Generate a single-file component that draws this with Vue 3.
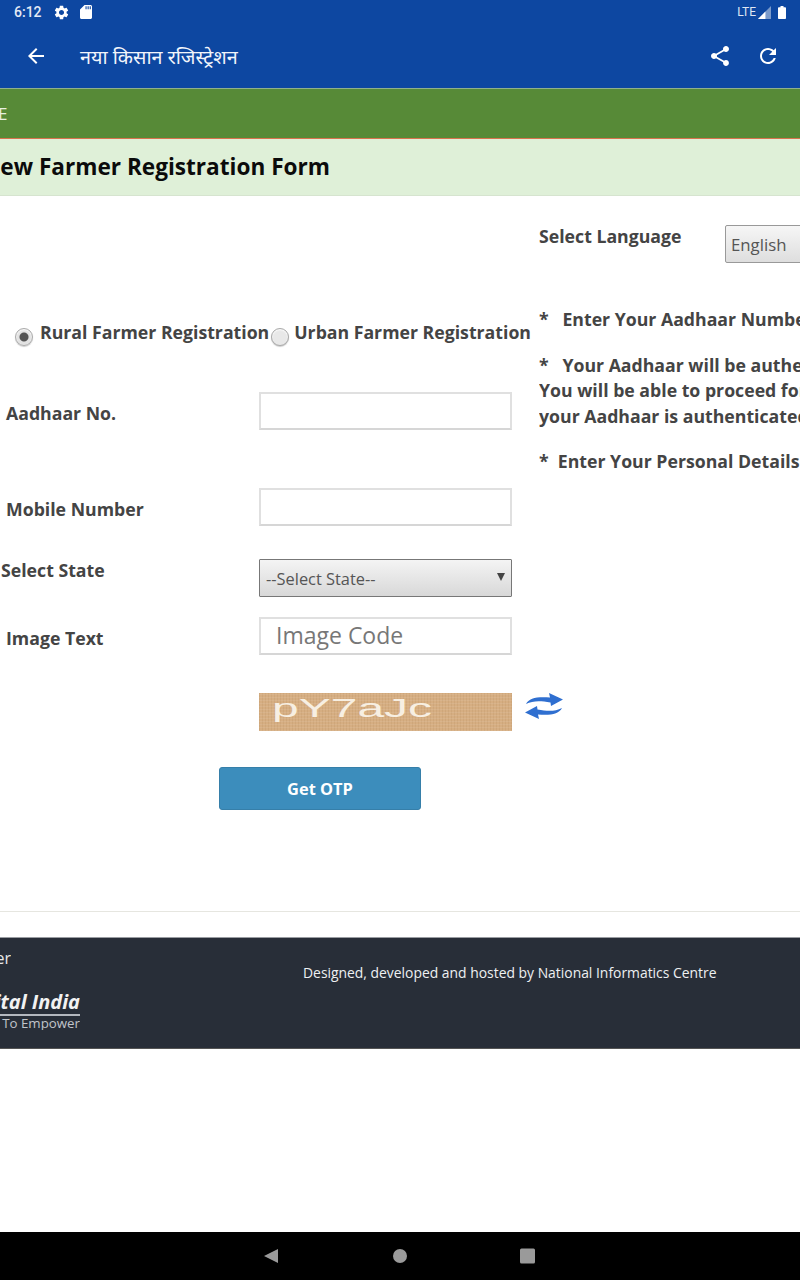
<template>
  <div class="screen">
    <header class="appbar">
      <div class="status">
        <span class="time">6:12</span>
        <svg class="st-icon gear" viewBox="0 0 24 24"><path d="M19.14 12.94c.04-.3.06-.61.06-.94 0-.32-.02-.64-.07-.94l2.03-1.58c.18-.14.23-.41.12-.61l-1.92-3.32c-.12-.22-.37-.29-.59-.22l-2.39.96c-.5-.38-1.03-.7-1.62-.94l-.36-2.54c-.04-.24-.24-.41-.48-.41h-3.84c-.24 0-.43.17-.47.41l-.36 2.54c-.59.24-1.13.57-1.62.94l-2.39-.96c-.22-.08-.47 0-.59.22L2.74 8.87c-.12.21-.08.47.12.61l2.03 1.58c-.05.3-.09.63-.09.94s.02.64.07.94l-2.03 1.58c-.18.14-.23.41-.12.61l1.92 3.32c.12.22.37.29.59.22l2.39-.96c.5.38 1.03.7 1.62.94l.36 2.54c.05.24.24.41.48.41h3.84c.24 0 .44-.17.47-.41l.36-2.54c.59-.24 1.13-.56 1.62-.94l2.39.96c.22.08.47 0 .59-.22l1.92-3.32c.12-.22.07-.47-.12-.61l-2.01-1.58zM12 15.6c-1.98 0-3.6-1.62-3.6-3.6s1.62-3.6 3.6-3.6 3.6 1.62 3.6 3.6-1.62 3.6-3.6 3.6z" /></svg>
        <svg class="st-icon sd" viewBox="0 0 12 14"><path d="M4.500 0H10.500C11.300 0 12 .7 12 1.500V12.500C12 13.300 11.300 14 10.500 14H1.500C.7 14 0 13.300 0 12.500V4.500zM5.500 1.200V4.200H6.600V1.200zM7.600 1.200V4.200H8.700V1.200zM9.700 1.200V4.200H10.800V1.200z" fill-rule="evenodd" /></svg>
        <span class="spacer"></span>
        <span class="lte">LTE</span>
        <svg class="signal" viewBox="0 0 14 14"><path d="M14 0V14H0z" fill="#ffffff" opacity="0.45" /><path d="M8 6V14H0z" fill="#ffffff" /></svg>
        <svg class="battery" viewBox="0 0 8 13"><path d="M2.500 0H5.500V1.200H7.200C7.600 1.200 8 1.600 8 2V12.200C8 12.600 7.600 13 7.200 13H.8C.4 13 0 12.600 0 12.200V2C0 1.600.4 1.200.8 1.200H2.500z" /></svg>
      </div>
      <div class="toolbar">
        <svg class="tb-icon back" viewBox="0 0 24 24"><path d="M20 11H7.830l5.590-5.590L12 4l-8 8 8 8 1.410-1.410L7.830 13H20v-2z" /></svg>
        <span class="tb-title">नया किसान रजिस्ट्रेशन</span>
        <span class="spacer"></span>
        <svg class="tb-icon share" viewBox="0 0 24 24"><path d="M18 16.080c-.76 0-1.440.3-1.960.77L8.910 12.700c.05-.23.09-.46.09-.7s-.04-.47-.09-.7l7.050-4.110c.54.5 1.250.81 2.040.81 1.660 0 3-1.340 3-3s-1.340-3-3-3-3 1.340-3 3c0 .24.04.47.09.7L8.040 9.810C7.500 9.310 6.790 9 6 9c-1.660 0-3 1.340-3 3s1.340 3 3 3c.79 0 1.500-.31 2.040-.81l7.120 4.160c-.05.21-.08.43-.08.65 0 1.610 1.310 2.920 2.920 2.920 1.610 0 2.920-1.310 2.920-2.920s-1.310-2.920-2.920-2.920z" /></svg>
        <svg class="tb-icon refresh" viewBox="0 0 24 24"><path d="M17.650 6.350C16.200 4.900 14.210 4 12 4c-4.420 0-7.990 3.580-7.990 8s3.570 8 7.990 8c3.730 0 6.840-2.550 7.730-6h-2.080c-.82 2.330-3.040 4-5.650 4-3.310 0-6-2.690-6-6s2.690-6 6-6c1.660 0 3.140.69 4.220 1.780L13 11h7V4l-2.350 2.350z" /></svg>
      </div>
    </header>

    <div class="greenbar"><span class="menu-clip">HOME</span></div>
    <div class="titlebar"><h1>New Farmer Registration Form</h1></div>

    <main class="content">
      <section class="form-col">
        <div class="radios">
          <label class="radio-item">
            <input type="radio" name="kind" checked />
            <span>Rural Farmer Registration</span>
          </label>
          <label class="radio-item">
            <input type="radio" name="kind" />
            <span>Urban Farmer Registration</span>
          </label>
        </div>

        <div class="row aadhaar">
          <label class="lbl">Aadhaar No.</label>
          <input class="txt" type="text" />
        </div>
        <div class="row mobile">
          <label class="lbl">Mobile Number</label>
          <input class="txt" type="text" />
        </div>
        <div class="row state">
          <label class="lbl lbl-state">Select State</label>
          <div class="select-wrap">
            <select class="sel">
              <option>--Select State--</option>
            </select>
            <svg class="caret" viewBox="0 0 8 8"><path d="M0 0H8L4 8z" /></svg>
          </div>
        </div>
        <div class="row image-text">
          <label class="lbl">Image Text</label>
          <input class="txt code" type="text" placeholder="Image Code" />
        </div>
        <div class="row captcha-row">
          <div class="captcha"><span>pY7aJc</span></div>
          <svg class="swap" viewBox="0 0 38 26">
            <path d="M1 11C4 5 12 3.500 25 4.500L24 0L38 6.500L26 13L25.500 9.500C15 7.500 8 7.500 1 11z" fill="#2f6fd0" />
            <path d="M37 15C34 21 26 22.500 13 21.500L14 26L0 19.500L12 13L12.500 16.500C23 18.500 30 18.500 37 15z" fill="#2f6fd0" />
          </svg>
        </div>
        <button class="otp" type="button">Get OTP</button>
      </section>

      <aside class="info-col">
        <div class="lang">
          <span class="lang-label">Select Language</span>
          <select class="lang-sel"><option>English</option></select>
        </div>
        <p class="note first">*&nbsp;&nbsp; Enter Your Aadhaar Number</p>
        <p class="note second">*&nbsp;&nbsp; Your Aadhaar will be authenticated<br />You will be able to proceed for registration once<br />your Aadhaar is authenticated</p>
        <p class="note third">*&nbsp; Enter Your Personal Details</p>
      </aside>
    </main>

    <div class="rule-area"></div>

    <footer class="footer">
      <div class="foot-left">
        <div class="clip-right disclaimer"><span>Disclaimer</span></div>
        <div class="clip-right logo">
          <div class="logo-inner">
            <span class="logo-main">Digital India</span>
            <span class="logo-sub">Power To Empower</span>
          </div>
        </div>
      </div>
      <div class="foot-credit">Designed, developed and hosted by National Informatics Centre</div>
    </footer>

    <div class="blank"></div>

    <nav class="navbar">
      <svg class="nav-icon" viewBox="0 0 16 16"><path d="M14 1V15L0 8z" /></svg>
      <svg class="nav-icon" viewBox="0 0 16 16"><circle cx="8" cy="8" r="7" /></svg>
      <svg class="nav-icon" viewBox="0 0 16 16"><rect x="0" y="0.500" width="15" height="15" rx="1.500" /></svg>
    </nav>
  </div>
</template>

<script setup>
</script>

<style>
html, body {
  margin: 0;
  background: #fff;
}
</style>

<style scoped>
.screen {
  width: 800px;
  height: 1280px;
  overflow: hidden;
  display: flex;
  flex-direction: column;
  font-family: "Open Sans", "Noto Sans", sans-serif;
  color: #444;
  background: #fff;
}

.spacer {
  flex: 1;
}

/* top bars */
.appbar {
  height: 88px;
  flex: none;
  background: #0d47a1;
  color: #fff;
  fill: #fff;
}
.status {
  height: 24px;
  display: flex;
  align-items: center;
  padding: 0 14px;
  font-family: Roboto, sans-serif;
}
.time {
  font-size: 14px;
  font-weight: 500;
  color: #e4eaf5;
}
.st-icon {
  flex: none;
}
.gear {
  width: 17px;
  height: 17px;
  margin-left: 11px;
}
.sd {
  width: 12px;
  height: 14px;
  margin-left: 10px;
}
.lte {
  font-size: 12px;
  color: #dfe6f3;
}
.signal {
  width: 13px;
  height: 13px;
  margin-left: 2px;
}
.battery {
  width: 8px;
  height: 13px;
  margin-left: 7px;
}
.toolbar {
  height: 64px;
  display: flex;
  align-items: center;
}
.tb-icon {
  width: 24px;
  height: 24px;
  flex: none;
}
.back {
  margin-left: 24px;
}
.tb-title {
  margin-left: 32px;
  font-size: 19.800px;
  font-family: "Noto Sans", "Noto Sans Devanagari", sans-serif;
  color: #f2f5fb;
}
.share {
  margin-right: 24px;
}
.refresh {
  margin-right: 20px;
}

.greenbar {
  height: 51px;
  flex: none;
  box-sizing: border-box;
  background: #578a37;
  border-top: 1px solid #8fb08c;
  border-bottom: 1px solid #d9734e;
  display: flex;
  align-items: center;
  overflow: hidden;
}
.menu-clip {
  margin-left: -43px;
  font-size: 17px;
  color: #e8f0e0;
}

.titlebar {
  height: 57px;
  flex: none;
  box-sizing: border-box;
  background: #dff0d8;
  border-bottom: 1px solid #d6e4cf;
  display: flex;
  align-items: center;
  overflow: hidden;
}
.titlebar h1 {
  margin: 0 0 1px -18px;
  font-size: 22.600px;
  font-weight: 700;
  white-space: nowrap;
  color: #0b0b0b;
}

/* main */
.content {
  height: 716px;
  flex: none;
  display: flex;
  font-size: 17.700px;
  font-weight: 700;
  border-bottom: 1px solid #e6e6e0;
  box-sizing: border-box;
}
.form-col {
  width: 539px;
  flex: none;
  padding-top: 126px;
  box-sizing: border-box;
}
.radios {
  display: flex;
  height: 24px;
  padding-left: 14px;
  white-space: nowrap;
}
.radio-item {
  display: flex;
  align-items: flex-start;
}
.radio-item input {
  appearance: none;
  width: 18px;
  height: 18px;
  margin: 6px 7px 0 1px;
  border-radius: 50%;
  border: 1px solid #aaa;
  background: #e8e8e8;
  box-shadow: inset 0 1px 2px #fff, 0 1px 1px #ccc;
  flex: none;
  box-sizing: border-box;
}
.radio-item input:checked {
  background: radial-gradient(circle, #555 0 4px, #e2e2e2 5px);
}
.radio-item + .radio-item input {
  margin-left: 2px;
  margin-right: 5px;
}
.radio-item span {
  line-height: 20px;
}

.row {
  display: flex;
  align-items: center;
  height: 38px;
}
.aadhaar {
  margin-top: 46px;
}
.mobile {
  margin-top: 58px;
}
.state {
  margin-top: 33px;
}
.image-text {
  margin-top: 20px;
}
.captcha-row {
  margin-top: 38px;
  padding-left: 259px;
  align-items: flex-start;
}
.lbl {
  width: 259px;
  flex: none;
  box-sizing: border-box;
  padding: 4px 0 0 6px;
}
.lbl-state {
  padding: 0 0 16px 1px;
}
.txt {
  width: 253px;
  height: 38px;
  box-sizing: border-box;
  border: 2px solid #e0e0e0;
  border-bottom-color: #d6d6d6;
  background: #fff;
  padding: 0 15px;
  outline: none;
  font-family: inherit;
}
.code {
  font-size: 23px;
  font-weight: 400;
  color: #666;
  padding-bottom: 3px;
}
.code::placeholder {
  color: #777;
  opacity: 1;
}
.select-wrap {
  position: relative;
  width: 253px;
  height: 38px;
}
.sel {
  appearance: none;
  width: 100%;
  height: 100%;
  box-sizing: border-box;
  border: 1px solid #777;
  border-radius: 1px;
  padding: 0 6px;
  font-family: inherit;
  font-size: 16.400px;
  font-weight: 400;
  color: #555;
  background: linear-gradient(#f4f4f4, #d8d8d8);
}
.caret {
  position: absolute;
  right: 7px;
  top: 14px;
  width: 8px;
  height: 8px;
  fill: #444;
}
.captcha {
  width: 253px;
  height: 38px;
  flex: none;
  overflow: hidden;
  background-color: #d6ae82;
  background-image:
    repeating-linear-gradient(0deg, rgba(255, 255, 255, 0.08) 0 1px, transparent 1px 3px),
    repeating-linear-gradient(90deg, rgba(120, 80, 30, 0.08) 0 1px, transparent 1px 3px);
}
.captcha span {
  display: block;
  margin: 3px 0 0 13px;
  font-family: "Liberation Sans", sans-serif;
  font-size: 25px;
  font-weight: 400;
  line-height: 24px;
  color: #f7efe2;
  transform: scaleX(1.92);
  transform-origin: left;
}
.swap {
  width: 38px;
  height: 26px;
  margin-left: 13px;
  flex: none;
}
.otp {
  display: block;
  width: 202px;
  height: 43px;
  margin: 36px 0 0 219px;
  border: 1px solid #367fa9;
  border-radius: 3px;
  background: #3c8dbc;
  color: #fff;
  font-family: inherit;
  font-size: 16.400px;
  font-weight: 700;
}

.info-col {
  flex: 1;
  min-width: 0;
  white-space: nowrap;
  overflow: hidden;
}
.lang {
  display: flex;
  padding-top: 29px;
  height: 38px;
}
.lang-label {
  width: 186px;
  flex: none;
  line-height: 22px;
}
.lang-sel {
  appearance: none;
  width: 120px;
  height: 38px;
  flex: none;
  box-sizing: border-box;
  border: 1px solid #999;
  border-radius: 2px;
  padding: 0 5px;
  font-family: inherit;
  font-size: 16.800px;
  font-weight: 400;
  color: #555;
  background: linear-gradient(#f6f6f6, #dedede);
}
.note {
  margin: 0;
  line-height: 25.500px;
}
.first {
  margin-top: 44px;
}
.second {
  margin-top: 20px;
}
.third {
  margin-top: 20px;
}

.rule-area {
  height: 25px;
  flex: none;
}

/* footer */
.footer {
  height: 112px;
  flex: none;
  box-sizing: border-box;
  background: #282e38;
  border-top: 1px solid #9a9da2;
  border-bottom: 1px solid #555;
  display: flex;
  color: #fff;
}
.foot-left {
  width: 80px;
  flex: none;
}
.clip-right {
  display: flex;
  justify-content: flex-end;
  white-space: nowrap;
  overflow: hidden;
}
.disclaimer {
  width: 11px;
  margin-top: 8px;
  font-size: 16px;
  line-height: 24px;
  color: #e8e8e8;
}
.logo {
  margin-top: 20px;
}
.logo-inner {
  display: flex;
  flex-direction: column;
  align-items: flex-end;
  flex: none;
}
.logo-main {
  font-family: "Open Sans", sans-serif;
  font-size: 20px;
  font-weight: 700;
  font-style: italic;
  line-height: 24px;
  border-bottom: 2px solid #b4b8bf;
  color: #f2f2f2;
}
.logo-sub {
  font-size: 13.300px;
  font-weight: 400;
  line-height: 14px;
  color: #c0c4ca;
}
.foot-credit {
  margin: 25px 0 0 223px;
  font-size: 13.900px;
  line-height: 20px;
  white-space: nowrap;
  color: #eef0f2;
}

.blank {
  flex: 1;
  background: #fff;
}
.navbar {
  height: 48px;
  flex: none;
  background: #000;
  display: flex;
  align-items: center;
  justify-content: center;
  gap: 112px;
  fill: #9a9a9a;
}
.nav-icon {
  width: 16px;
  height: 16px;
  flex: none;
}
</style>
